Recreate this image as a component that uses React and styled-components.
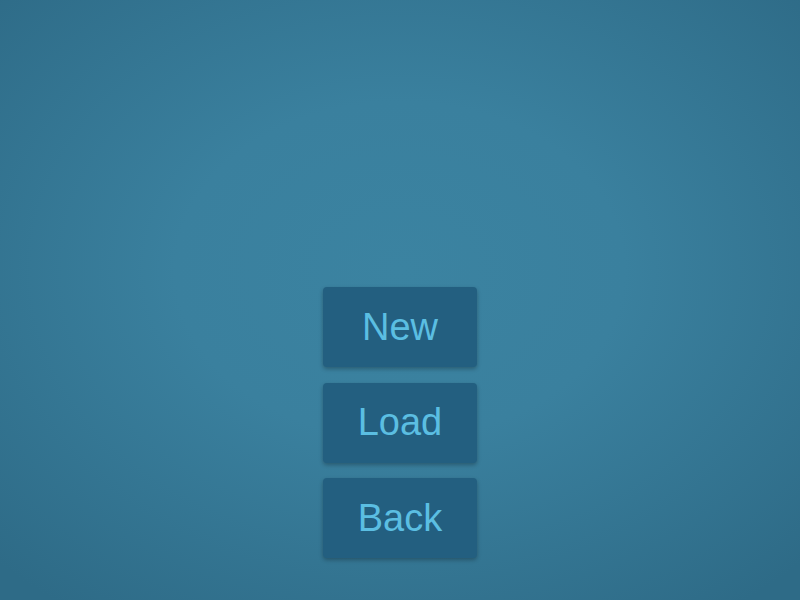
import styled, { createGlobalStyle } from "styled-components";

const GlobalStyle = createGlobalStyle`
  html, body {
    margin: 0;
    padding: 0;
  }
  body {
    font-family: "Liberation Sans", Arial, sans-serif;
  }
`;

const Screen = styled.div`
  width: 800px;
  height: 600px;
  box-sizing: border-box;
  display: flex;
  flex-direction: column;
  align-items: center;
  justify-content: flex-end;
  padding-bottom: 42px;
  background: radial-gradient(ellipse 70% 70% at 50% 45%, #3b83a1 0%, #3a809e 40%, #2e6b87 100%);
`;

const Menu = styled.nav`
  display: flex;
  flex-direction: column;
  gap: 15.5px;
`;

const MenuButton = styled.button`
  width: 154px;
  height: 80px;
  border: none;
  border-radius: 4px;
  background: #235f80;
  color: #5bbee2;
  font-family: "Liberation Sans", Arial, sans-serif;
  font-size: 38px;
  padding: 0;
  box-shadow: 0 2px 4px rgba(0, 0, 0, 0.28);
  cursor: pointer;
`;

const items = ["New", "Load", "Back"];

const App = () => {
  return (
    <>
      <GlobalStyle />
      <Screen>
        <Menu>
          {items.map((label) => (
            <MenuButton key={label}>{label}</MenuButton>
          ))}
        </Menu>
      </Screen>
    </>
  );
};

export default App;
